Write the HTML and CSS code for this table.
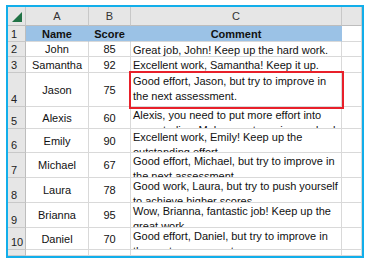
FILE: index.html
```html
<!DOCTYPE html>
<html>
<head>
<meta charset="utf-8">
<link rel="stylesheet" href="styles.css">
</head>
<body>
<div class="frame">
  <div class="sheet">
    <div class="hd corner"><span class="tri"></span></div>
    <div class="hd">A</div>
    <div class="hd">B</div>
    <div class="hd">C</div>
    <div class="hd"></div>

    <div class="rn r1">1</div>
    <div class="c th r1">Name</div>
    <div class="c th r1">Score</div>
    <div class="c th r1">Comment</div>
    <div class="c r1"></div>

    <div class="rn r2">2</div>
    <div class="c ctr r2">John</div>
    <div class="c ctr r2">85</div>
    <div class="c txt r2">Great job, John! Keep up the hard work.</div>
    <div class="c r2"></div>

    <div class="rn r3">3</div>
    <div class="c ctr r3">Samantha</div>
    <div class="c ctr r3">92</div>
    <div class="c txt r3">Excellent work, Samantha! Keep it up.</div>
    <div class="c r3"></div>

    <div class="rn r4">4</div>
    <div class="c ctr r4">Jason</div>
    <div class="c ctr r4">75</div>
    <div class="c txt r4 sel">Good effort, Jason, but try to improve in the next assessment.</div>
    <div class="c r4"></div>

    <div class="rn r5">5</div>
    <div class="c ctr r5">Alexis</div>
    <div class="c ctr r5">60</div>
    <div class="c txt r5">Alexis, you need to put more effort into your studies. Make sure to review and ask</div>
    <div class="c r5"></div>

    <div class="rn r6">6</div>
    <div class="c ctr r6">Emily</div>
    <div class="c ctr r6">90</div>
    <div class="c txt r6">Excellent work, Emily! Keep up the outstanding effort.</div>
    <div class="c r6"></div>

    <div class="rn r7">7</div>
    <div class="c ctr r7">Michael</div>
    <div class="c ctr r7">67</div>
    <div class="c txt r7">Good effort, Michael, but try to improve in the next assessment.</div>
    <div class="c r7"></div>

    <div class="rn r8">8</div>
    <div class="c ctr r8">Laura</div>
    <div class="c ctr r8">78</div>
    <div class="c txt r8">Good work, Laura, but try to push yourself to achieve higher scores.</div>
    <div class="c r8"></div>

    <div class="rn r9">9</div>
    <div class="c ctr r9">Brianna</div>
    <div class="c ctr r9">95</div>
    <div class="c txt r9">Wow, Brianna, fantastic job! Keep up the great work.</div>
    <div class="c r9"></div>

    <div class="rn r10">10</div>
    <div class="c ctr r10">Daniel</div>
    <div class="c ctr r10">70</div>
    <div class="c txt r10">Good effort, Daniel, but try to improve in the next assessment.</div>
    <div class="c r10"></div>

    <div class="rn r11"></div>
    <div class="c r11"></div>
    <div class="c r11"></div>
    <div class="c r11"></div>
    <div class="c r11"></div>
  </div>
</div>
</body>
</html>
```

FILE: styles.css
```css
html, body {
  margin: 0;
  padding: 0;
  background: #ffffff;
}
body {
  font-family: "Liberation Sans", Arial, sans-serif;
  font-size: 11px;
  color: #111;
}
.frame {
  margin: 5px 0 0 6px;
  width: 354px;
  border: 2px solid #12aeea;
  overflow: hidden;
}
.sheet {
  display: grid;
  grid-template-columns: 18px 63px 42px 211px 20px;
  grid-template-rows: 19px 16px 15px 16px 34px 22px 24px 25px 25px 25px 22px 6px;
}
.hd {
  background: #e6e6e6;
  border-right: 1px solid #c8c8c8;
  border-bottom: 1px solid #bdbdbd;
  display: flex;
  align-items: center;
  justify-content: center;
  color: #333;
  box-sizing: border-box;
}
.corner {
  position: relative;
}
.tri {
  position: absolute;
  right: 3px;
  bottom: 3px;
  width: 0;
  height: 0;
  border-left: 10px solid transparent;
  border-bottom: 10px solid #217346;
}
.rn {
  background: #e6e6e6;
  border-right: 1px solid #bdbdbd;
  border-bottom: 1px solid #c8c8c8;
  box-sizing: border-box;
  display: flex;
  align-items: flex-end;
  padding: 0 0 1px 3px;
  color: #222;
}
.c {
  border-right: 1px solid #d9d9d9;
  border-bottom: 1px solid #d9d9d9;
  box-sizing: border-box;
  overflow: hidden;
  white-space: normal;
}
.th {
  background: #9bc2e6;
  font-weight: bold;
  display: flex;
  align-items: center;
  justify-content: center;
  border-right-color: #9bc2e6;
}
.ctr {
  display: flex;
  align-items: center;
  justify-content: center;
}
.txt {
  padding: 1px 2px 0 2px;
  line-height: 15px;
}
.sel {
  position: relative;
  outline: 2px solid #e8202a;
  outline-offset: 0;
  overflow: visible;
  padding-left: 2px;
}
```
